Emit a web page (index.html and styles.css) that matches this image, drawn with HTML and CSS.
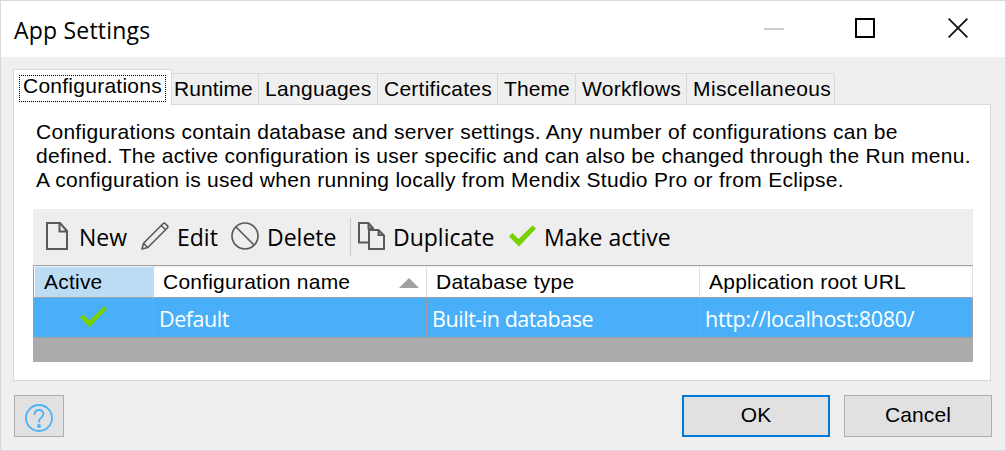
FILE: index.html
```html
<!DOCTYPE html>
<html lang="en">
<head>
<meta charset="utf-8">
<title>App Settings</title>
<link rel="stylesheet" href="styles.css">
</head>
<body>
<div class="window">
  <header class="titlebar">
    <h1 class="title">App Settings</h1>
    <div class="window-controls">
      <svg width="20" height="20" viewBox="0 0 20 20"><path d="M0 11h20" stroke="#ccc" stroke-width="2"/></svg>
      <svg width="20" height="20" viewBox="0 0 20 20"><rect x="1" y="1" width="18" height="18" fill="none" stroke="#000" stroke-width="2"/></svg>
      <svg width="20" height="20" viewBox="0 0 20 20"><path d="M.6.6l18.8 18.8M19.4.6L.6 19.4" stroke="#111" stroke-width="1.8"/></svg>
    </div>
  </header>
  <main class="content">
    <nav class="tabs">
      <div class="tab tab-active"><span class="focus-ring">Configurations</span></div>
      <div class="tab tab-runtime">Runtime</div>
      <div class="tab tab-languages">Languages</div>
      <div class="tab tab-certificates">Certificates</div>
      <div class="tab tab-theme">Theme</div>
      <div class="tab tab-workflows">Workflows</div>
      <div class="tab tab-misc">Miscellaneous</div>
    </nav>
    <section class="panel">
      <p class="description">Configurations contain database and server settings. Any number of configurations can be<br>defined. The active configuration is user specific and can also be changed through the Run menu.<br>A configuration is used when running locally from Mendix Studio Pro or from Eclipse.</p>
      <div class="toolbar">
        <div class="tool tool-new">
          <svg width="22" height="28" viewBox="0 0 22 28" fill="none" stroke="#5a5a5a" stroke-width="2"><path d="M1 1h13l7 8v18H1zM13.500 1v8.500H21"/></svg>
          <span>New</span>
        </div>
        <div class="tool tool-edit">
          <svg width="28" height="28" viewBox="0 0 28 28" fill="none" stroke="#5a5a5a" stroke-width="1.600" stroke-linejoin="round"><path d="M1 27l1.500-5.800L22 1.700q1.200-1.200 2.400 0l1.900 1.900q1.200 1.200 0 2.400L6.800 25.500zM2.500 21.200l4.300 4.300M20.300 3.500l4.200 4.200"/></svg>
          <span>Edit</span>
        </div>
        <div class="tool tool-delete">
          <svg width="28" height="28" viewBox="0 0 28 28" fill="none" stroke="#5a5a5a" stroke-width="1.700"><circle cx="14" cy="14" r="13"/><path d="M5 5l18 18"/></svg>
          <span>Delete</span>
        </div>
        <div class="tool tool-duplicate">
          <svg width="27" height="28" viewBox="0 0 27 28" fill="none" stroke="#5a5a5a" stroke-width="2"><path d="M11 20.500H1V1h9.500l5 6M10.500 1v5.500H16M11 8h9.500l5.500 5.500V27H11zM20.500 8v5H26"/></svg>
          <span>Duplicate</span>
        </div>
        <div class="tool tool-active">
          <svg width="28" height="22" viewBox="0 0 28 22"><path d="M0 11.500L3.500 8 9.500 14 23.500 0.500 27 3.500 10 21.500z" fill="#78d000"/></svg>
          <span>Make active</span>
        </div>
      </div>
      <div class="grid">
        <div class="cell head head-sorted">Active</div>
        <div class="cell head"><span class="head-name">Configuration name</span><svg class="sort" width="20" height="10" viewBox="0 0 20 10"><path d="M0 10L10 0l10 10z" fill="#a0a0a0"/></svg></div>
        <div class="cell head">Database type</div>
        <div class="cell head"><span class="head-url">Application root URL</span></div>
        <div class="cell value value-check"><svg width="28" height="22" viewBox="0 0 28 22"><path d="M0 11.500L3 8.500 9.500 14.500 24 0.500 27 3 9.500 21.500z" fill="#78d000"/></svg></div>
        <div class="cell value">Default</div>
        <div class="cell value value-db">Built-in database</div>
        <div class="cell value value-url">http://localhost:8080/</div>
      </div>
    </section>
    <footer class="footer">
      <button class="button help" aria-label="Help">
        <svg width="28" height="28" viewBox="0 0 28 28" fill="none" stroke="#4ab2fb" stroke-width="1.800"><circle cx="14" cy="14" r="13"/><path d="M9.500 11c0-6.500 9-6.500 9-1 0 4-4.500 3.500-4.500 7v1.500"/><circle cx="14" cy="22" r="2" fill="#4ab2fb" stroke="none"/></svg>
      </button>
      <button class="button ok">OK</button>
      <button class="button cancel">Cancel</button>
    </footer>
  </main>
</div>
</body>
</html>
```

FILE: styles.css
```css
* { box-sizing: border-box; }
body { margin: 0; font: 21px/24px "Liberation Sans", Arial, sans-serif; letter-spacing: .28px; color: #000; }
svg { display: block; flex: none; }
.window { width: 1006px; height: 451px; border: 1px solid #d9d9d9; background: #efefef; overflow: hidden; }
.titlebar { height: 56px; background: #fff; display: flex; justify-content: space-between; padding: 0 37px 0 13px; }
.title { margin: 0; font: 400 23px/58px "Open Sans", "Noto Sans", sans-serif; letter-spacing: .2px; }
.window-controls { display: flex; gap: 72px; padding-top: 17px; }
.window-controls svg:first-child { margin-right: -1px; }
.window-controls svg:nth-child(2) { margin-right: 1px; }
.content { padding: 12px 13px 0 12px; }
.tabs { display: flex; align-items: flex-end; height: 36px; }
.tab { height: 32px; border: 1px solid #d9d9d9; border-left: 0; border-bottom: 0; padding: 3px 0 0 6px; white-space: nowrap; letter-spacing: .3px; }
.tab-active { width: 159px; height: 36px; background: #fff; border-left: 1px solid #d9d9d9; padding: 5px 0 0 5px; position: relative; z-index: 1; }
.focus-ring { display: block; width: 147px; height: 27px; border: 1px dotted #000; padding-left: 3px; line-height: 19px; letter-spacing: .25px; }
.tab-runtime { width: 87px; padding-left: 2px; letter-spacing: .1px; }
.tab-languages { width: 119px; }
.tab-certificates { width: 120px; letter-spacing: .25px; }
.tab-theme { width: 78px; letter-spacing: .1px; }
.tab-workflows { width: 111px; }
.tab-misc { width: 148px; letter-spacing: .4px; }
.panel { width: 978px; height: 277px; margin-top: -1px; border: 1px solid #d9d9d9; background: #fff; padding: 15px 17px 0 19px; }
.description { margin: 0 0 17px 3px; white-space: nowrap; }
.toolbar { height: 56px; background: #eee; display: flex; padding: 9px 0 9px 13px; font: 23px/38px "Open Sans", "Noto Sans", sans-serif; letter-spacing: 0; }
.tool { display: flex; white-space: nowrap; }
.tool svg { margin-top: 4px; }
.tool-new { width: 95px; gap: 11px; }
.tool-edit { width: 90px; gap: 8px; }
.tool-delete { width: 120px; gap: 8px; border-right: 1px solid #c8c8c8; }
.tool-duplicate { width: 158px; gap: 8px; padding-left: 7px; }
.tool-active { gap: 7px; }
.tool.tool-active svg { margin-top: 7px; }
.grid { display: grid; grid-template-columns: 121px 273px 273px 273px; grid-template-rows: 32px 40px; height: 97px; background: #ababab; border-top: 1px solid #a0a0a0; letter-spacing: .22px; }
.head { background: #fff; border-top: 1px solid #f0f0f0; border-bottom: 1px solid #a0a0a0; border-right: 1px solid #e0e0e0; padding: 3px 0 0 9px; display: flex; }
.head-sorted { background: #bcdcf4; border-right-color: #bcdcf4; padding-left: 8px; box-shadow: inset 1px 0 #fff; border-left: 1px solid #a0a0a0; padding-left: 10px; }
.sort { margin: 8px 0 0 auto; }
.head:nth-child(2) { padding-right: 7px; }
.value { background: #48aff8; color: #fff; border-right: 1px solid #a0a0a0; border-bottom: 1px solid #a0a0a0; padding-left: 5px; font: 21.500px/41px "Open Sans", "Noto Sans", sans-serif; letter-spacing: -.45px; }
.value-url { letter-spacing: -.3px; }
.value-check { border-left: 1px solid #a0a0a0; padding: 8px 0 0 46px; }
.footer { display: flex; margin-top: 14px; padding-left: 1px; }
.button { height: 42px; border: 1px solid #adadad; background: #e1e1e1; color: #000; padding: 0 0 2px; font: inherit; letter-spacing: .1px; }
.help { width: 50px; display: flex; justify-content: center; padding: 8px 0 0; }
.ok { width: 148px; border: 2px solid #0078d7; margin-left: auto; margin-right: 14px; }
.cancel { width: 148px; }
```
